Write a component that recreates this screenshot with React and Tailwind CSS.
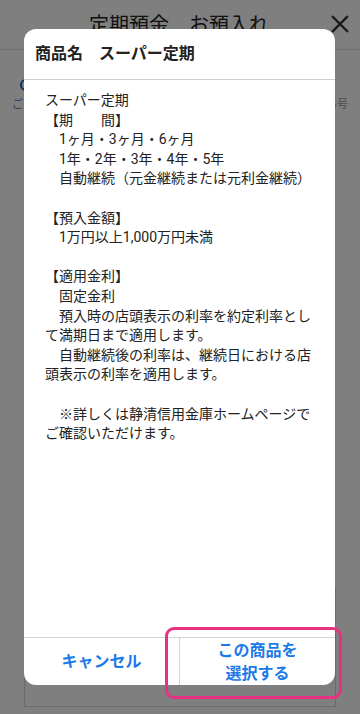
import React from "react";

const FONT = { fontFamily: 'Roboto, "Noto Sans CJK JP", "Noto Sans", sans-serif' };

const lines = [
  "スーパー定期",
  "【期　　間】",
  "　1ヶ月・3ヶ月・6ヶ月",
  "　1年・2年・3年・4年・5年",
  "　自動継続（元金継続または元利金継続）",
  "",
  "【預入金額】",
  "　1万円以上1,000万円未満",
  "",
  "【適用金利】",
  "　固定金利",
  "　預入時の店頭表示の利率を約定利率とし",
  "て満期日まで適用します。",
  "　自動継続後の利率は、継続日における店",
  "頭表示の利率を適用します。",
  "",
  "　※詳しくは静清信用金庫ホームページで",
  "ご確認いただけます。",
];

export default function App() {
  return (
    <div className="relative w-[360px] h-[714px] overflow-hidden bg-white" style={FONT}>
      {/* background page */}
      <div className="flex flex-col h-full">
        <div className="relative h-[50px] border-b border-[#dedede] flex items-center justify-center">
          <span className="text-[20px] text-[#222] leading-none mt-[1px] -ml-[2px]">定期預金　お預入れ</span>
          <svg className="absolute right-[11px] top-[15px]" width="18" height="18" viewBox="0 0 18 18">
            <path d="M2 2 L16 16 M16 2 L2 16" stroke="#333" strokeWidth="2.4" strokeLinecap="square" />
          </svg>
        </div>
        <div className="flex justify-between items-start px-[12px] pt-[29px]">
          <div className="flex flex-col items-start">
            <div className="ml-[8px] w-[22px] h-[12px] rounded-full border-2 border-[#1c5fb8]" />
            <span className="text-[11px] text-[#5b7fbf] mt-[6px]">ご入力</span>
          </div>
          <div className="flex flex-col items-end pt-[18px]">
            <span className="text-[11px] text-[#999]">口座番号</span>
          </div>
        </div>
        <div className="flex-1" />
        <div className="mx-[24px] mb-[7px] h-[120px] border border-[#d6d6d6]" />
      </div>

      {/* overlay */}
      <div className="absolute inset-0 bg-black/50" />

      {/* dialog */}
      <div className="absolute left-[24px] top-[29px] w-[311px] h-[656px] bg-white rounded-[12px] flex flex-col overflow-hidden">
        <div className="h-[51px] border-b border-[#cfcfcf] flex items-center px-[11px]">
          <span className="text-[16px] font-bold text-[#222] -mt-[1px]">商品名　スーパー定期</span>
        </div>
        <div className="flex-1 pl-[21px] pr-[18px] pt-[11px] text-[14px] leading-[19.6px] text-[#222]">
          {lines.map((l, i) => (
            <div key={i} className="whitespace-pre h-[19.6px]">{l}</div>
          ))}
        </div>
        <div className="h-[48px] border-t border-[#d4d4d4] flex">
          <div className="flex-1 flex items-center justify-center text-[16px] font-bold text-[#1c7ae8]">
            キャンセル
          </div>
          <div className="w-px bg-[#d4d4d4]" />
          <div className="flex-1 flex items-center justify-center text-center text-[16px] font-bold text-[#1c7ae8] leading-[23px] pt-[1px]">
            この商品を<br />選択する
          </div>
        </div>
      </div>

      {/* annotation highlight */}
      <div className="absolute left-[165px] top-[627px] w-[177px] h-[72px] border-[3px] border-[#e9327f] rounded-[9px]" />
    </div>
  );
}
